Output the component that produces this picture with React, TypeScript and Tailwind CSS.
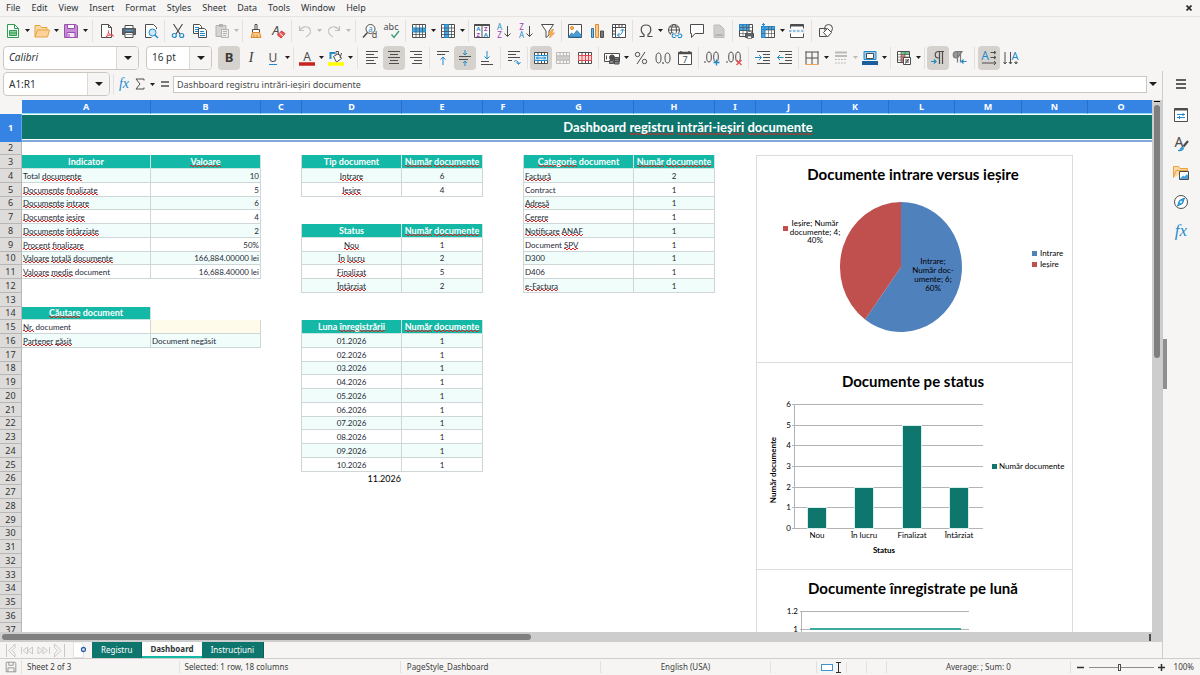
import React, { useState } from "react";

const G = "#4d4d4d";
const BLUE = "#1e8bcd";

/* ---------- icons ---------- */

function Svg({ children, size = 16 }: { children: React.ReactNode; size?: number }) {
  return (
    <svg width={size} height={size} viewBox="0 0 16 16" fill="none" stroke={G} strokeWidth={1} aria-hidden="true" className="shrink-0 overflow-visible">
      {children}
    </svg>
  );
}

function Glyph({ x, y, size, color = G, bold, italic, serif, children }: {
  x: number; y: number; size: number; color?: string; bold?: boolean; italic?: boolean; serif?: boolean; children: React.ReactNode;
}) {
  return (
    <text
      x={x} y={y} fontSize={size} fill={color} stroke="none" textAnchor="middle"
      fontWeight={bold ? 700 : 400} fontStyle={italic ? "italic" : "normal"}
      fontFamily={serif ? '"Liberation Serif", serif' : '"Noto Sans", sans-serif'}
    >
      {children}
    </text>
  );
}

const tableGrid = "M1.5 2.5h13v11h-13zM1.5 6h13M1.5 10h13M5 2.5v11M8.5 2.5v11M11.5 2.5v11";

const icons: Record<string, React.ReactNode> = {
  newDoc: (
    <>
      <path d="M2.5 1.5h7l4 4v9h-11z" fill="#fff" stroke="#2f9e4f" />
      <path d="M9.5 1.5v4h4" stroke="#2f9e4f" />
      <path d="M4.5 7.5h7v5h-7zM4.5 10h7" fill="#8ad0a0" stroke="#2f9e4f" />
    </>
  ),
  open: (
    <>
      <path d="M1 14V2.5h5l1.5 2H13v3" fill="#fbd9a5" stroke="#e8a33d" />
      <path d="M1 14L3.5 7h12l-2 7z" fill="#fcd29a" stroke="#e8a33d" />
    </>
  ),
  save: (
    <>
      <path d="M1.5 1.5H13L14.5 3v11.5h-13z" fill="#c58ed3" stroke="#9b4fb0" />
      <path d="M4.5 1.5h7v4h-7z" fill="#fff" stroke="#9b4fb0" />
      <path d="M4 9.5h8v5H4z" fill="#f3e3f7" stroke="#9b4fb0" />
      <path d="M6 11v3" stroke="#9b4fb0" />
    </>
  ),
  pdf: (
    <>
      <path d="M2.5 1.5h7l3 3v10h-10z" fill="#fff" />
      <path d="M9.5 1.5v3h3" />
      <path d="M7 14c2-2 3-5 2.5-6.500M9 9c1 2 3 4 6 4M7 14c1.5-1.5 4-2.5 7-2" stroke="#e5484d" />
    </>
  ),
  print: (
    <>
      <path d="M4 2.5h8v3H4z" fill="#fff" />
      <path d="M1.5 5.5h13v6h-13z" fill="#5b6770" stroke="#4d565d" />
      <path d="M4 9.5h8v5H4z" fill="#fff" />
      <path d="M5 11.5h6" stroke="#9a9a9a" />
      <path d="M4.5 7.5h7" stroke="#4aa3df" />
    </>
  ),
  preview: (
    <>
      <path d="M13.5 6V4.5l-3-3h-8v13h6" fill="#fff" />
      <circle cx="9.5" cy="9.5" r="3.5" fill="#cfe8f8" stroke={BLUE} />
      <path d="M12 12l3 3" stroke={BLUE} strokeWidth={1.5} />
    </>
  ),
  cut: (
    <>
      <path d="M3.5 1L10 11M12.5 1L6 11" strokeWidth={1.2} />
      <circle cx="4.3" cy="12.5" r="2" stroke={BLUE} strokeWidth={1.2} />
      <circle cx="11.7" cy="12.5" r="2" stroke={BLUE} strokeWidth={1.2} />
    </>
  ),
  copy: (
    <>
      <path d="M1.5 1.5h6l2 2v7h-8z" fill="#fff" />
      <path d="M3 4.5h4M3 6.5h3M3 8.5h3" stroke={BLUE} />
      <path d="M6.5 5.5h6l2 2v7h-8z" fill="#fff" />
      <path d="M8 8.5h4M8 10.5h5M8 12.5h5" stroke={BLUE} />
    </>
  ),
  paste: (
    <>
      <path d="M2 2.5h10v11H2z" fill="#d6d4d2" stroke="#b5b3b1" />
      <path d="M5 1h4v3H5z" fill="#b5b3b1" stroke="none" />
      <path d="M7.5 6.5h7v8h-7z" fill="#efeeed" stroke="#b5b3b1" />
      <path d="M9 8.5h4M9 10.5h4M9 12.5h3" stroke="#b5b3b1" />
    </>
  ),
  brush: (
    <>
      <path d="M7 1.5h2v5H7z" fill="#fff" />
      <path d="M4.5 6.5h7v3h-7z" fill="#fff" />
      <path d="M4.5 9.5h7l1.5 5H3z" fill="#fbc98a" stroke="#e08b2b" />
      <path d="M6 14v-2.5M9 14v-2" stroke="#e08b2b" />
    </>
  ),
  clear: (
    <>
      <Glyph x={6} y={12} size={13} italic>A</Glyph>
      <path d="M7.5 12l4-4L15 10.5 11 15z" fill="#ef5b5b" stroke="#d13438" />
      <path d="M9.500 10l3.500 3" stroke="#fff" />
    </>
  ),
  undo: <path d="M2.5 3v4.5H7M2.5 7.5C5 3.5 10 2.5 12.5 5.5s.5 6-3.5 8.5" stroke="#c2c0be" strokeWidth={1.2} />,
  redo: <path d="M13.5 3v4.5H9M13.5 7.5C11 3.5 6 2.5 3.5 5.5s-.5 6 3.5 8.5" stroke="#c2c0be" strokeWidth={1.2} />,
  find: (
    <>
      <circle cx="8.5" cy="6" r="4.5" fill="#fff" />
      <path d="M5.5 9.5L1 14.5" strokeWidth={1.5} />
      <Glyph x={8.5} y={8.5} size={8} color={BLUE}>a</Glyph>
      <Glyph x={12.5} y={15} size={9}>d</Glyph>
    </>
  ),
  spell: (
    <>
      <Glyph x={7} y={7} size={9}>abc</Glyph>
      <path d="M7.5 11.5l2.5 3L15 8" stroke="#2f9e6f" strokeWidth={1.3} />
    </>
  ),
  rowOps: (
    <>
      <path d="M1.5 1.5h13v13h-13z" fill="#fff" />
      <path d="M1.5 5h13v4h-13z" fill="#4aa3df" stroke={BLUE} />
      <path d="M1.5 11.5h13M5 1.5v13M8.5 1.5v13M11.5 1.5v13" strokeWidth={0.8} />
    </>
  ),
  colOps: (
    <>
      <path d="M1.5 1.5h13v13h-13z" fill="#fff" />
      <path d="M4.5 1.5h4v13h-4z" fill="#4aa3df" stroke={BLUE} />
      <path d="M1.5 5h13M1.5 8.5h13M1.5 11.5h13M11.5 1.5v13" strokeWidth={0.8} />
    </>
  ),
  sort: (
    <>
      <path d="M.5 1.5h15v13H.5zM8 1.5v13" fill="#fff" />
      <path d="M.5 2h15" strokeWidth={2} />
      <Glyph x={4.3} y={8} size={6} color={BLUE} bold>A</Glyph>
      <Glyph x={4.3} y={14} size={6} color="#a33bb5" bold>Z</Glyph>
      <Glyph x={11.8} y={8} size={6} color="#a33bb5" bold>Z</Glyph>
      <Glyph x={11.8} y={14} size={6} color={BLUE} bold>A</Glyph>
    </>
  ),
  sortAsc: (
    <>
      <Glyph x={3.5} y={7} size={8} color={BLUE}>A</Glyph>
      <Glyph x={3.5} y={15} size={8} color="#a33bb5">Z</Glyph>
      <path d="M11.5 3v10.5M8.5 10.5l3 3 3-3" />
    </>
  ),
  sortDesc: (
    <>
      <Glyph x={3.5} y={7} size={8} color="#a33bb5">Z</Glyph>
      <Glyph x={3.5} y={15} size={8} color={BLUE}>A</Glyph>
      <path d="M11.5 3v10.5M8.5 10.5l3 3 3-3" />
    </>
  ),
  filter: (
    <>
      <path d="M1.5 1.5h12L9 8v4l-3 2.5V8z" fill="#fff" />
      <path d="M12 6.500L8 11h3l-1.5 4 5-5h-3l2-3.500z" fill="#fbb55c" stroke="#e08b2b" strokeWidth={0.7} />
    </>
  ),
  image: (
    <>
      <path d="M1.5 1.5h13v13h-13z" fill="#fff" />
      <circle cx="5" cy="5" r="1.5" fill="#fbb55c" stroke="#e08b2b" />
      <path d="M2 13.5L4.5 10l2 1.5 3.500-4 4.5 5V14H2z" fill="#4a9fd9" stroke="#1f78b4" strokeWidth={0.8} />
    </>
  ),
  chart: (
    <>
      <path d="M2.5 5.5h2v9h-2z" fill="#7fb9e6" stroke="#1f78b4" />
      <path d="M6.5 1.5h3v13h-3z" fill="#fbc98a" stroke="#e08b2b" />
      <path d="M11.5 8h3v6.500h-3z" fill="#7a7a7a" />
    </>
  ),
  pivot: (
    <>
      <path d="M1.5 1.5h13v13h-13z" fill="#fff" />
      <path d="M1.5 4.5h13M4.5 1.5v13M8 1.5v3M11 1.5v3M1.5 8h3M1.5 11h3" />
      <path d="M6.5 12c3 .5 5.500-2 5-5.500M9.5 8l2-2 2 2M8.500 10l-2 2 2 2" stroke={BLUE} />
    </>
  ),
  omega: <path d="M1.5 13.5H6v-2C2.5 9.5 1.5 2 8 2s5.5 7.5 2 9.5v2h4.5" strokeWidth={1.2} />,
  link: (
    <>
      <circle cx="7" cy="7" r="5.5" fill="#fff" />
      <ellipse cx="7" cy="7" rx="2.5" ry="5.5" />
      <path d="M1.5 7h11M2.5 4h9M2.5 10h4" />
      <rect x="4" y="10.5" width="12" height="4.5" fill="#f6f5f4" stroke="none" />
      <path d="M8.5 11h-2a1.800 1.800 0 000 3.500h2M11 11h2.500a1.800 1.800 0 010 3.500H11M8 12.700h4" stroke={BLUE} strokeWidth={1.1} />
    </>
  ),
  comment: <path d="M1.5 1.5h13v9H6l-3.500 4v-4h-1z" fill="#fff" />,
  headerFooter: (
    <>
      <path d="M3 2h6l4 4v8.500H3z" fill="#d0cecc" stroke="#bdbbb9" />
      <path d="M4.5 11h7v2h-7z" fill="#b5b3b1" stroke="none" />
    </>
  ),
  printArea: (
    <>
      <path d="M1.5 1.5h13v12h-13z" fill="#fff" />
      <path d="M1.5 1.5h9v6h-9z" fill="#4aa3df" stroke={BLUE} />
      <path d="M1.5 4.5h13M1.5 7.5h13M1.5 10.5h13M5 1.5v12M8.5 1.5v12M11.5 1.5v12" strokeWidth={0.6} />
      <path d="M7.5 10.5h8v4h-8z" fill="#5b6770" />
      <path d="M9.5 8.5h4v2h-4zM9.5 13h4v2.500h-4z" fill="#fff" strokeWidth={0.7} />
    </>
  ),
  freeze: (
    <>
      <path d="M1.5 3.5h13v11h-13z" fill="#fff" />
      <path d="M1.5 3.5h13v3h-13zM1.5 3.5H5v11H1.500z" fill="#4aa3df" stroke={BLUE} />
      <path d="M5 7h9.500M5 10.500h9.500M8.5 3v11.500M11.5 3v11.500M1.5 10.500H5" strokeWidth={0.6} />
      <path d="M2 1.5h3M3.5 0v3" stroke={BLUE} />
    </>
  ),
  split: (
    <>
      <path d="M1.5 5.5v-4h13v4M1.5 10.5v4h13v-4" fill="#fff" />
      <path d="M1.5 2.5h13" strokeWidth={2} />
      <path d="M0 8h16" stroke={BLUE} strokeDasharray="2.5 1.5" />
    </>
  ),
  shapes: (
    <>
      <path d="M1.5 5.5h7v8h-7z" />
      <circle cx="10.5" cy="5.5" r="4" />
      <path d="M9.5 5.5l4 4-4 4.500-4-4.500z" fill="#fff" />
    </>
  ),
  bold: <Glyph x={8} y={12} size={13} bold color="#3a3a3a">B</Glyph>,
  italic: <Glyph x={8} y={12} size={14} italic serif color="#3a3a3a">I</Glyph>,
  underline: (
    <>
      <Glyph x={8} y={12} size={12}>U</Glyph>
      <path d="M4 14.5h8" stroke={BLUE} />
    </>
  ),
  fontColor: (
    <>
      <Glyph x={8} y={11} size={12}>A</Glyph>
      <path d="M0 14h16" stroke="#c9211e" strokeWidth={3.5} />
    </>
  ),
  highlight: (
    <>
      <path d="M2.500 9V3H7" stroke={BLUE} strokeWidth={2} />
      <path d="M5.5 6.500l5-3 3 5-5 3.500zM8 4.500v-3h2.500V5M12 8l1.500-5" fill="#fff" />
      <path d="M0 14h16" stroke="#ffff00" strokeWidth={3.5} />
    </>
  ),
  alignLeft: <path d="M2 1.5h12M2 4.5h8M2 7.5h12M2 10.5h8M2 13.5h10" />,
  alignCenter: <path d="M2 1.5h12M4 4.5h8M2 7.5h12M4 10.5h8M3 13.5h10" />,
  alignRight: <path d="M2 1.5h12M6 4.5h8M2 7.5h12M6 10.5h8M4 13.5h10" />,
  alignTop: (
    <>
      <path d="M2 1.5h12M2 4.5h8" />
      <path d="M8 15V7M5.5 9.5L8 7l2.5 2.5" stroke={BLUE} />
    </>
  ),
  alignMiddle: (
    <>
      <path d="M2 6.5h12M2 9.5h9" />
      <path d="M8 0v5M6 3l2 2 2-2M8 16v-5M6 13l2-2 2 2" stroke={BLUE} />
    </>
  ),
  alignBottom: (
    <>
      <path d="M2 11.5h8M2 14.5h12" />
      <path d="M8 1v8M5.5 6.5L8 9l2.5-2.5" stroke={BLUE} />
    </>
  ),
  wrap: (
    <>
      <path d="M2 1.5h12M2 4.5h8M2 7.5h12M2 10.5h4" />
      <path d="M8 11.5c2-1.5 4-1 4.500 2.500M10.500 12l2 2.500 2-2.500" stroke={BLUE} />
    </>
  ),
  merge: (
    <>
      <path d={tableGrid} fill="#fff" />
      <path d="M1.5 5.5h13v5h-13z" fill="#d8ecf9" stroke={BLUE} />
      <path d="M3 8h10M5 6.5L3.5 8 5 9.5M11 6.5L12.5 8 11 9.5" stroke={BLUE} />
    </>
  ),
  mergeCells: (
    <>
      <path d={tableGrid} stroke="#bdbbb9" />
      <path d="M1.5 6h13v4h-13z" fill="#d0cecc" stroke="#bdbbb9" />
    </>
  ),
  splitCells: (
    <>
      <path d={tableGrid} fill="#fff" />
      <path d="M1.5 5.5h13v5h-13zM5 5.5v5M8.5 5.5v5M11.5 5.5v5" fill="#fbdada" stroke="#e5484d" />
    </>
  ),
  currency: (
    <>
      <path d="M.5 3.5h15v8H.5z" fill="#fff" />
      <circle cx="8" cy="7.5" r="2.5" fill={G} />
      <path d="M2.500 5.5v4" />
      <path d="M5.5 10.5h4v3h-4zM10.5 7.5H15V14h-4.5zM10.5 9.5H15M10.5 11.5H15" fill="#8a8a8a" />
    </>
  ),
  percent: (
    <>
      <circle cx="4.5" cy="4.5" r="2.2" />
      <circle cx="11.5" cy="11.5" r="2.2" />
      <path d="M12 2L4 14" />
    </>
  ),
  number: (
    <>
      <ellipse cx="3.5" cy="8" rx="2.5" ry="5" />
      <ellipse cx="12.5" cy="8" rx="2.5" ry="5" />
      <path d="M8 12v2" strokeWidth={1.2} />
    </>
  ),
  date: (
    <>
      <path d="M1.5 2.5h13v12h-13z" fill="#fff" />
      <path d="M1.5 3h13" strokeWidth={2.5} />
      <path d="M4 1v2M12 1v2" strokeWidth={1.5} />
      <Glyph x={8} y={13} size={9}>7</Glyph>
    </>
  ),
  addDec: (
    <>
      <path d="M1 11v2" />
      <ellipse cx="5" cy="7" rx="2.3" ry="5" />
      <ellipse cx="12" cy="7" rx="2.3" ry="5" />
      <path d="M9.5 12.5h6M12.5 9.5v6" stroke={BLUE} strokeWidth={1.3} />
    </>
  ),
  delDec: (
    <>
      <path d="M1 11v2" />
      <ellipse cx="5" cy="7" rx="2.3" ry="5" />
      <ellipse cx="12" cy="7" rx="2.3" ry="5" />
      <path d="M10.5 10l5 5M15.5 10l-5 5" stroke="#e5484d" strokeWidth={1.2} />
    </>
  ),
  indent: (
    <>
      <path d="M2 1.5h13M8 4.5h7M8 7.5h7M8 10.5h7M2 13.5h13" />
      <path d="M0 7.5h6M4 5l2.5 2.5L4 10" stroke={BLUE} />
    </>
  ),
  outdent: (
    <>
      <path d="M2 1.5h13M8 4.5h7M8 7.5h7M8 10.5h7M2 13.5h13" />
      <path d="M.5 7.5h6M3 5L.5 7.5 3 10" stroke={BLUE} />
    </>
  ),
  borders: (
    <>
      <path d="M2 1.5v13M14 1.5v13M1.5 2h13M8 2v12M2 8h12" />
      <path d="M1.5 14.5h13" stroke="#f0a55a" />
    </>
  ),
  lineStyle: (
    <>
      <path d="M2 2.5h12M2 6h12" stroke="#bdbbb9" strokeWidth={2} />
      <path d="M2 9.5h12M2 13h12" stroke="#bdbbb9" strokeDasharray="2 1" />
    </>
  ),
  borderColor: (
    <>
      <path d="M2 1.5h12v8H2z" fill="#9ccbee" stroke={BLUE} />
      <path d="M4.5 3.5h7v5h-7z" fill="#fff" />
      <path d="M0 13h16" stroke="#1c5f9e" strokeWidth={4} />
    </>
  ),
  conditional: (
    <>
      <path d="M1.5 1.5h12v11h-12z" fill="#fff" />
      <path d="M5 2h8v3H5z" fill="#6cc788" stroke="none" />
      <path d="M5 5h4v7H5z" fill="#ef7f7f" stroke="none" />
      <path d="M1.5 4.5h12M1.5 7h12M1.5 10h12M5 1.5v11M9 1.5v11" strokeWidth={0.6} />
      <path d="M7.5 7.5h7v7h-7z" fill="#fff" />
      <path d="M9 10h4M9 12h4M12.5 9l-3 4.500" />
    </>
  ),
  ltr: (
    <>
      <path d="M14 1.5H8.500a3 3 0 000 6.500h1M9.5 1.5V14M12.5 1.5V14" strokeWidth={1.2} />
      <path d="M1 11.5h5M4 9.5l2 2-2 2" stroke={BLUE} strokeWidth={1.2} />
    </>
  ),
  rtl: (
    <>
      <path d="M10 1.5H4.500a3 3 0 000 6.500h1zM5.5 1.5v11M8.5 1.5v11" fill="#9a9a9a" stroke="#7a7a7a" strokeWidth={1.2} />
      <path d="M9.5 11.5h5M11.5 9.5l-2 2 2 2" stroke={BLUE} strokeWidth={1.2} />
    </>
  ),
  textH: (
    <>
      <Glyph x={4} y={10} size={12} color={BLUE}>A</Glyph>
      <path d="M9.5 2.5h5M13 1l2 1.500L13 4M9.5 7.5h5M13 6l2 1.500L13 9M1 13h14M13 11l2 2-2 2" />
    </>
  ),
  textV: (
    <>
      <path d="M2 2v12M.5 12L2 14l1.500-2M7.5 2v12M6 12l1.500 2L9 12M13 11v3M11.5 12l1.500 2 1.500-2" />
      <Glyph x={12} y={10} size={11} color={BLUE}>A</Glyph>
    </>
  ),
  properties: (
    <>
      <path d="M1.5 1.5h13v13h-13z" fill="#fff" />
      <path d="M1.5 2.5h13" strokeWidth={2} />
      <path d="M4 7.5h8M4 10.5h8M10 6v3M6.5 9v3" stroke={BLUE} />
    </>
  ),
  styles: (
    <>
      <Glyph x={6} y={11} size={14}>A</Glyph>
      <path d="M15 5l-4.500 5.500" strokeWidth={2.2} />
      <path d="M5 14.5c2 .5 5 0 5.500-2 .3-1.500-2-2-2.500-.500s-1 2.500-3 2.500z" fill="#4aa3df" stroke={BLUE} />
    </>
  ),
  gallery: (
    <>
      <path d="M.5 12.500v-11h5l1.500 2h7.500v2M.5 12.500L3 5.500h12" fill="#fbd9a5" stroke="#e8a33d" />
      <path d="M6.5 6.500h9v8h-9z" fill="#fff" />
      <path d="M7 13.500l3-3 1.500 1L14 9l1 1.500V14H7z" fill="#4aa3df" stroke="none" />
    </>
  ),
  navigator: (
    <>
      <circle cx="8" cy="8" r="6.5" fill="#fff" />
      <path d="M11.5 4l-2 5.500-5 2.500 2-5.500z" fill="#4aa3df" stroke={BLUE} />
      <circle cx="8" cy="8" r="1" fill="#fff" stroke="none" />
    </>
  ),
  menu: <path d="M3 4h10M3 8h10M3 12h10" stroke="#2e2e2e" strokeWidth={1.5} />,
  saved: (
    <>
      <path d="M2.5 2.5h10l1 1v10h-11z" stroke="#8f8d8b" />
      <path d="M5.5 2.5V6h5V2.500M4.5 13.500V9h7v4.500" stroke="#8f8d8b" />
    </>
  ),
};

/* ---------- toolbars ---------- */

type Tool = "sep" | "gap" | { icon: string; label: string; menu?: boolean; off?: boolean };

const standardTools: Tool[] = [
  { icon: "newDoc", label: "New", menu: true },
  { icon: "open", label: "Open", menu: true },
  { icon: "save", label: "Save", menu: true },
  "gap",
  { icon: "pdf", label: "Export as PDF" },
  { icon: "print", label: "Print" },
  { icon: "preview", label: "Print Preview" },
  "sep",
  { icon: "cut", label: "Cut" },
  { icon: "copy", label: "Copy" },
  { icon: "paste", label: "Paste", menu: true, off: true },
  "sep",
  { icon: "brush", label: "Clone Formatting" },
  { icon: "clear", label: "Clear Formatting" },
  "sep",
  { icon: "undo", label: "Undo", menu: true, off: true },
  { icon: "redo", label: "Redo", menu: true, off: true },
  "gap",
  { icon: "find", label: "Find and Replace" },
  { icon: "spell", label: "Spelling" },
  "sep",
  { icon: "rowOps", label: "Row", menu: true },
  { icon: "colOps", label: "Column", menu: true },
  "sep",
  { icon: "sort", label: "Sort" },
  { icon: "sortAsc", label: "Sort Ascending" },
  { icon: "sortDesc", label: "Sort Descending" },
  { icon: "filter", label: "AutoFilter" },
  "sep",
  { icon: "image", label: "Insert Image" },
  { icon: "chart", label: "Insert Chart" },
  { icon: "pivot", label: "Insert Pivot Table" },
  "sep",
  { icon: "omega", label: "Special Character", menu: true },
  { icon: "link", label: "Insert Hyperlink" },
  { icon: "comment", label: "Insert Comment" },
  { icon: "headerFooter", label: "Headers and Footers", off: true },
  "sep",
  { icon: "printArea", label: "Define Print Area" },
  { icon: "freeze", label: "Freeze Rows and Columns", menu: true },
  { icon: "split", label: "Split Window" },
  "gap",
  { icon: "shapes", label: "Draw Functions" },
];

const formatTools: Tool[] = [
  { icon: "bold", label: "Bold" },
  { icon: "italic", label: "Italic" },
  { icon: "underline", label: "Underline", menu: true },
  "sep",
  { icon: "fontColor", label: "Font Color", menu: true },
  { icon: "highlight", label: "Background Color", menu: true },
  "gap",
  { icon: "alignLeft", label: "Align Left" },
  { icon: "alignCenter", label: "Center Horizontally" },
  { icon: "alignRight", label: "Align Right" },
  "sep",
  { icon: "alignTop", label: "Align Top" },
  { icon: "alignMiddle", label: "Center Vertically" },
  { icon: "alignBottom", label: "Align Bottom" },
  "sep",
  { icon: "wrap", label: "Wrap Text" },
  "sep",
  { icon: "merge", label: "Merge and Center" },
  { icon: "mergeCells", label: "Merge Cells", off: true },
  { icon: "splitCells", label: "Unmerge Cells" },
  "sep",
  { icon: "currency", label: "Format as Currency", menu: true },
  { icon: "percent", label: "Format as Percent" },
  { icon: "number", label: "Format as Number" },
  { icon: "date", label: "Format as Date" },
  "sep",
  { icon: "addDec", label: "Add Decimal Place" },
  { icon: "delDec", label: "Delete Decimal Place" },
  "gap",
  { icon: "indent", label: "Increase Indent" },
  { icon: "outdent", label: "Decrease Indent" },
  "sep",
  { icon: "borders", label: "Borders", menu: true },
  { icon: "lineStyle", label: "Border Style", menu: true, off: true },
  { icon: "borderColor", label: "Border Color", menu: true },
  "sep",
  { icon: "conditional", label: "Conditional", menu: true },
  "sep",
  { icon: "ltr", label: "Left-To-Right" },
  { icon: "rtl", label: "Right-To-Left" },
  "gap",
  { icon: "textH", label: "Text direction from left to right" },
  { icon: "textV", label: "Text direction from top to bottom" },
];

function Caret({ big, off }: { big?: boolean; off?: boolean }) {
  return (
    <svg width={big ? 8 : 5} height={big ? 4 : 3} viewBox="0 0 8 4" preserveAspectRatio="none" aria-hidden="true">
      <path d="M0 0h8L4 4z" fill={off ? "#bdbbb9" : "#1e1e1e"} />
    </svg>
  );
}

function Toolbar({ tools, active, onToggle }: { tools: Tool[]; active: string[]; onToggle: (icon: string) => void }) {
  return (
    <>
      {tools.map((t, i) => {
        if (t === "sep" || t === "gap") {
          return (
            <div key={i} className={`flex h-[22px] shrink-0 justify-center ${t === "gap" ? "w-[7px]" : "w-[5px]"}`}>
              <div className="w-px bg-[#e3e1df]" />
            </div>
          );
        }
        const on = active.includes(t.icon);
        return (
          <div key={t.icon} className="flex shrink-0 items-center">
            <button
              aria-label={t.label}
              disabled={t.off}
              onClick={() => onToggle(t.icon)}
              className={`flex h-6 w-[22px] items-center justify-center rounded ${on ? "bg-[#d5d2ce]" : "hover:bg-[#eae8e6]"}`}
            >
              <Svg>{icons[t.icon]}</Svg>
            </button>
            {t.menu && (
              <button aria-label={`${t.label} options`} disabled={t.off} className="flex h-6 w-[7px] items-center justify-center">
                <Caret off={t.off} />
              </button>
            )}
          </div>
        );
      })}
    </>
  );
}

function Combo({ label, value, className, italic }: { label: string; value: string; className: string; italic?: boolean }) {
  return (
    <div className={`flex h-6 shrink-0 overflow-hidden rounded border border-[#cdc7c2] bg-white ${className}`}>
      <input
        aria-label={label}
        defaultValue={value}
        className={`min-w-0 flex-1 bg-transparent pl-[5px] text-[10px] text-[#2e3436] outline-none ${italic ? "italic" : ""}`}
      />
      <button aria-label={`${label} list`} className="flex w-[22px] shrink-0 items-center justify-center border-l border-[#dcd8d4] bg-[#f6f5f4]">
        <Caret big />
      </button>
    </div>
  );
}

/* ---------- sheet data ---------- */

type Align = "left" | "center" | "right";
interface Cell {
  text: string;
  align: Align;
  kind: "head" | "body" | "plain" | "edge";
  tint?: string;
}

const columns = [
  { name: "A", w: "w-[129px]" },
  { name: "B", w: "w-[110px]" },
  { name: "C", w: "w-[41px]" },
  { name: "D", w: "w-[100px]" },
  { name: "E", w: "w-[81px]" },
  { name: "F", w: "w-[41px]" },
  { name: "G", w: "w-[110px]" },
  { name: "H", w: "w-[81px]" },
  { name: "I", w: "w-[41px]" },
  { name: "J", w: "w-[66px]" },
  { name: "K", w: "w-[67px]" },
  { name: "L", w: "w-[66px]" },
  { name: "M", w: "w-[67px]" },
  { name: "N", w: "w-[66px]" },
  { name: "O", w: "w-[67px]" },
  { name: "P", w: "w-[66px]" },
  { name: "Q", w: "w-[67px]" },
  { name: "R", w: "w-[66px]" },
];

// underscores wrap the words flagged by the spell checker
const blocks: { row: number; before?: string; cols: [string, string]; align: [Align, Align]; data: [string, string][] }[] = [
  {
    row: 3, cols: ["A", "B"], align: ["left", "right"],
    data: [
      ["Indicator", "_Valoare_"],
      ["Total _documente_", "10"],
      ["_Documente_ _finalizate_", "5"],
      ["_Documente_ _intrare_", "6"],
      ["_Documente_ _iesire_", "4"],
      ["_Documente_ _întârziate_", "2"],
      ["_Procent_ _finalizare_", "50%"],
      ["_Valoare_ _totală_ _documente_", "166,884.00000 lei"],
      ["_Valoare_ _medie_ document", "16,688.40000 lei"],
    ],
  },
  {
    row: 3, before: "C", cols: ["D", "E"], align: ["center", "center"],
    data: [["Tip document", "_Număr_ _documente_"], ["_Intrare_", "6"], ["_Iesire_", "4"]],
  },
  {
    row: 8, before: "C", cols: ["D", "E"], align: ["center", "center"],
    data: [
      ["Status", "_Număr_ _documente_"],
      ["_Nou_", "1"],
      ["_În_ _lucru_", "2"],
      ["_Finalizat_", "5"],
      ["_Întârziat_", "2"],
    ],
  },
  {
    row: 15, before: "C", cols: ["D", "E"], align: ["center", "center"],
    data: [
      ["Luna _înregistrării_", "_Număr_ _documente_"],
      ...["01", "02", "03", "04", "05", "06", "07", "08", "09", "10"].map((m) => [`${m}.2026`, "1"] as [string, string]),
    ],
  },
  {
    row: 3, before: "F", cols: ["G", "H"], align: ["left", "center"],
    data: [
      ["_Categorie_ document", "_Număr_ _documente_"],
      ["_Factură_", "2"],
      ["Contract", "1"],
      ["_Adresă_", "1"],
      ["_Cerere_", "1"],
      ["_Notificare_ _ANAF_", "1"],
      ["Document _SPV_", "1"],
      ["D300", "1"],
      ["D406", "1"],
      ["_e-Factura_", "1"],
    ],
  },
];

const cells: Record<string, Cell> = {
  A14: { text: "_Căutare_ document", align: "center", kind: "head" },
  A15: { text: "_Nr._ document", align: "left", kind: "body" },
  B15: { text: "", align: "left", kind: "body", tint: "bg-[#fffbeb]" },
  A16: { text: "_Partener_ _găsit_", align: "left", kind: "body", tint: "bg-[#f0fdfa]" },
  B16: { text: "Document negăsit", align: "left", kind: "body", tint: "bg-[#f0fdfa]" },
  D26: { text: "11.2026", align: "right", kind: "plain" },
};

blocks.forEach((b) =>
  b.data.forEach((pair, r) => {
    const row = b.row + r;
    if (b.before) cells[b.before + row] = { text: "", align: "left", kind: "edge" };
    pair.forEach((text, c) => {
      cells[b.cols[c] + row] = {
        text,
        align: r === 0 ? "center" : b.align[c],
        kind: r === 0 ? "head" : "body",
        tint: row % 2 === 0 ? "bg-[#f0fdfa]" : "bg-white",
      };
    });
  })
);

const alignClass = { left: "text-left", center: "text-center", right: "text-right" };

const kindClass = {
  head: "bg-[#14b8a6] text-[9px] font-bold text-white border-r border-b border-[#cbe5e1]",
  body: "text-[8px] text-[#1f2937] border-r border-b border-[#cfd6d8]",
  plain: "text-[9px] text-black",
  edge: "border-r border-[#cfd6d8]",
};

function Spelled({ text }: { text: string }) {
  return (
    <>
      {text.split("_").map((part, i) =>
        i % 2 ? (
          <span
            key={i}
            className="bg-[linear-gradient(45deg,transparent_35%,#dc2626_35%,#dc2626_65%,transparent_65%),linear-gradient(135deg,transparent_35%,#dc2626_35%,#dc2626_65%,transparent_65%)] bg-[length:4px_2px,4px_2px] bg-[position:0_100%,2px_100%] bg-repeat-x"
          >
            {part}
          </span>
        ) : (
          part
        )
      )}
    </>
  );
}

function SheetCell({ cell }: { cell?: Cell }) {
  if (!cell) return <td className="p-0" />;
  return (
    <td className={`overflow-hidden px-px py-0 leading-3 whitespace-nowrap ${alignClass[cell.align]} ${kindClass[cell.kind]} ${cell.tint && cell.kind === "body" ? cell.tint : ""}`}>
      <Spelled text={cell.text} />
    </td>
  );
}

function SheetTable() {
  const rows = Array.from({ length: 36 }, (_, i) => i + 2);
  return (
    <table className="w-[1353px] table-fixed border-separate border-spacing-0 font-[Lato,sans-serif]">
      <colgroup>
        <col className="w-[22px]" />
        {columns.map((c) => (
          <col key={c.name} className={c.w} />
        ))}
      </colgroup>
      <thead>
        <tr className="h-[14px] font-['Noto_Sans',sans-serif] text-[9px] leading-3 text-white">
          <th className="bg-[#f6f5f4] p-0" aria-label="Select all" />
          {columns.map((c) => (
            <th key={c.name} scope="col" className="border-r border-b border-r-[#2a6fc4] border-b-[#8fdcf5] bg-[#3584e4] p-0 font-bold">
              {c.name}
            </th>
          ))}
        </tr>
      </thead>
      <tbody>
        <tr className="h-[28px]">
          <th scope="row" className="border-r border-[#5ea0ee] bg-[#3584e4] p-0 font-['Noto_Sans',sans-serif] text-[9px] font-bold text-white">1</th>
          <td colSpan={18} className="border-t border-b-2 border-t-white border-b-[#7fa8de] bg-white p-0 align-top">
            <h1 className="h-6 bg-[#0f766e] text-center text-[13px] leading-6 font-bold text-white">
              <Spelled text="Dashboard _registru_ _intrări-ieșiri_ _documente_" />
            </h1>
          </td>
        </tr>
        {rows.map((n) => (
          <tr key={n} className={n % 4 === 2 ? "h-[13px]" : "h-[14px]"}>
            <th
              scope="row"
              className="border-r border-b border-[#b9b7b5] bg-[#dedcda] p-0 align-bottom font-['Noto_Sans',sans-serif] text-[9px] leading-3 font-normal text-[#2e3436]"
            >
              {n}
            </th>
            {columns.map((c) => (
              <SheetCell key={c.name} cell={cells[c.name + n]} />
            ))}
          </tr>
        ))}
      </tbody>
    </table>
  );
}

/* ---------- charts ---------- */

function ChartFrame({ title, children }: { title: string; children: React.ReactNode }) {
  return (
    <div className="border-b border-[#dcdcdc] bg-white">
      <svg
        width="315" height="206" viewBox="1 1 315 206" role="img" aria-label={title}
        className="block font-[Lato,sans-serif]" fontSize="8" textAnchor="middle"
      >
        <text x="157" y="25" fontSize="15" fontWeight="700">{title}</text>
        {children}
      </svg>
    </div>
  );
}

function PieChart() {
  return (
    <ChartFrame title="Documente intrare versus ieșire">
      <path d="M145 112V47A61 65 0 1 1 109 164.500Z" fill="#4f81bd" />
      <path d="M145 112L109 164.500A61 65 0 0 1 145 47Z" fill="#c0504d" />
      <rect x="27" y="71" width="5" height="5" fill="#c0504d" />
      <text x="59" y="71">Ieșire; Număr</text>
      <text x="59" y="80">documente; 4;</text>
      <text x="59" y="88">40%</text>
      <text x="177" y="109">Intrare;</text>
      <text x="177" y="118">Număr doc-</text>
      <text x="177" y="127">umente; 6;</text>
      <text x="177" y="136">60%</text>
      <g textAnchor="start">
        <rect x="276" y="96" width="5" height="5" fill="#4f81bd" />
        <text x="284" y="101">Intrare</text>
        <rect x="276" y="107" width="5" height="5" fill="#c0504d" />
        <text x="284" y="112">Ieșire</text>
      </g>
    </ChartFrame>
  );
}

const statusData = [
  { name: "Nou", value: 1 },
  { name: "În lucru", value: 2 },
  { name: "Finalizat", value: 5 },
  { name: "Întârziat", value: 2 },
];

function StatusChart() {
  const y = (v: number) => Math.round(166 - v * 20.66);
  return (
    <ChartFrame title="Documente pe status">
      {[0, 1, 2, 3, 4, 5, 6].map((v) => (
        <g key={v}>
          <line x1="36" x2="227" y1={y(v) + 0.5} y2={y(v) + 0.5} stroke="#b3b3b3" />
          <text x="35" y={y(v) + 3} textAnchor="end">{v}</text>
        </g>
      ))}
      <line x1="38.5" x2="38.5" y1="42" y2="167" stroke="#b3b3b3" />
      {statusData.map((d, i) => {
        const cx = 61 + Math.round(i * 47.3);
        return (
          <g key={d.name}>
            <rect x={cx - 10} y={y(d.value)} width="20" height={167 - y(d.value)} fill="#d5f0ec" />
            <rect x={cx - 9} y={y(d.value) + 1} width="18" height={165 - y(d.value)} fill="#0f766e" />
            <text x={cx} y="176">{d.name}</text>
          </g>
        );
      })}
      <text x="128" y="191" fontWeight="700">Status</text>
      <text transform="translate(20 108) rotate(-90)" fontWeight="700">Număr documente</text>
      <rect x="236" y="102" width="5" height="5" fill="#0f766e" />
      <text x="243" y="107" textAnchor="start">Număr documente</text>
    </ChartFrame>
  );
}

function MonthChart() {
  return (
    <ChartFrame title="Documente înregistrate pe lună">
      {["1.2", "1", "0.8", "0.6", "0.4", "0.2", "0"].map((label, i) => (
        <g key={label}>
          <text x="42" y={45 + i * 18} textAnchor="end">{label}</text>
          <line x1="44" x2="213" y1={42.5 + i * 18} y2={42.5 + i * 18} stroke="#b3b3b3" />
        </g>
      ))}
      <line x1="45.5" x2="45.5" y1="42" y2="151" stroke="#b3b3b3" />
      <line x1="54" x2="205" y1="60" y2="60" stroke="#3aa9a0" strokeWidth="2" />
    </ChartFrame>
  );
}

/* ---------- page ---------- */

const menus = ["File", "Edit", "View", "Insert", "Format", "Styles", "Sheet", "Data", "Tools", "Window", "Help"];
const sheets = ["Registru", "Dashboard", "Instrucțiuni"];
const panels = [
  { icon: "properties", label: "Properties" },
  { icon: "styles", label: "Styles" },
  { icon: "gallery", label: "Gallery" },
  { icon: "navigator", label: "Navigator" },
];

function FormulaBar() {
  return (
    <div className="flex h-[29px] items-start bg-[#f6f5f4] pt-px pr-[5px] pl-[3px]">
      <Combo label="Name Box" value="A1:R1" className="w-[107px]" />
      <div className="flex h-6 flex-1 items-center">
        <div className="ml-[3px] h-5 w-px bg-[#e3e1df]" />
        <button aria-label="Function Wizard" className="ml-1 w-[12px] font-['Liberation_Serif',serif] text-[14px] leading-4 text-[#1e8bcd] italic">fx</button>
        <button aria-label="Select Function" className="ml-1 flex w-[12px] justify-center">
          <svg width="10" height="12" viewBox="0 0 10 12" fill="none" stroke={G}>
            <path d="M9 2.5V1H1l4 5-4 5h8V9.5" />
          </svg>
        </button>
        <button aria-label="Function list" className="flex w-3 justify-center">
          <Caret />
        </button>
        <button aria-label="Formula" className="flex w-[14px] justify-center">
          <svg width="8" height="6" viewBox="0 0 8 6" stroke={G} strokeWidth="1.5">
            <path d="M0 1h8M0 5h8" />
          </svg>
        </button>
        <input
          aria-label="Input line"
          defaultValue="Dashboard registru intrări-ieșiri documente"
          className="ml-px h-[17px] min-w-0 flex-1 border border-[#cdc7c2] bg-white pl-[3px] text-[9px] text-[#4a4a4a] outline-none"
        />
        <button aria-label="Expand Formula Bar" className="ml-[2px]">
          <Caret big />
        </button>
      </div>
    </div>
  );
}

function StatusBar() {
  return (
    <footer className="flex h-[17px] shrink-0 items-center border-t border-[#cfcdcb] bg-[#f6f5f4] text-[8px] text-[#3d3d3d]">
      <div className="flex w-[22px] shrink-0 justify-center border-r border-[#e3e1df]"><Svg size={14}>{icons.saved}</Svg></div>
      <div className="flex-[152] border-r border-[#e3e1df] pl-[5px]">Sheet 2 of 3</div>
      <div className="flex-[216] border-r border-[#e3e1df] pl-[5px]">Selected: 1 row, 18 columns</div>
      <div className="flex-[194] border-r border-[#e3e1df] pl-[6px]">PageStyle_Dashboard</div>
      <div className="flex-[169] border-r border-[#e3e1df] text-center">English (USA)</div>
      <div className="h-3 w-[46px] border-r border-[#e3e1df]" />
      <div className="flex w-[30px] items-center justify-center gap-[3px] border-r border-[#e3e1df]">
        <span className="h-[7px] w-3 border border-[#3f93d0] bg-white" />
        <svg width="5" height="11" viewBox="0 0 5 11" stroke="#2e2e2e" aria-hidden="true">
          <path d="M0 .5h5M0 10.5h5M2.5 0v11" />
        </svg>
      </div>
      <div className="h-3 w-5 border-r border-[#e3e1df]" />
      <div className="h-3 w-5 border-r border-[#e3e1df]" />
      <div className="flex-[184] border-r border-[#e3e1df] text-center">Average: ; Sum: 0</div>
      <div className="flex w-[129px] shrink-0 items-center justify-end gap-1 pr-[6px]">
        <button aria-label="Zoom Out" className="flex w-2 justify-center">
          <svg width="7" height="7" viewBox="0 0 7 7" stroke="#2e2e2e" strokeWidth="1.5"><path d="M0 3.5h7" /></svg>
        </button>
        <input
          type="range"
          aria-label="Zoom"
          min={0}
          max={100}
          defaultValue={48}
          className="h-3 w-[65px] appearance-none bg-transparent [&::-webkit-slider-runnable-track]:h-px [&::-webkit-slider-runnable-track]:bg-[#8f8d8b] [&::-webkit-slider-thumb]:-mt-[3px] [&::-webkit-slider-thumb]:h-[7px] [&::-webkit-slider-thumb]:w-[3px] [&::-webkit-slider-thumb]:appearance-none [&::-webkit-slider-thumb]:border [&::-webkit-slider-thumb]:border-[#4d4d4d] [&::-webkit-slider-thumb]:bg-white"
        />
        <button aria-label="Zoom In" className="flex w-2 justify-center">
          <svg width="7" height="7" viewBox="0 0 7 7" stroke="#2e2e2e" strokeWidth="1.5"><path d="M0 3.5h7M3.5 0v7" /></svg>
        </button>
        <span className="ml-1">100%</span>
      </div>
    </footer>
  );
}

export default function App() {
  const [sheet, setSheet] = useState("Dashboard");
  const [active, setActive] = useState(["bold", "alignCenter", "alignMiddle", "merge", "ltr", "textH"]);

  const toggle = (icon: string) => {
    if (!formatTools.some((t) => typeof t === "object" && t.icon === icon)) return;
    setActive((prev) => (prev.includes(icon) ? prev.filter((x) => x !== icon) : [...prev, icon]));
  };

  return (
    <div className="flex h-screen flex-col overflow-hidden bg-[#f6f5f4] font-['Noto_Sans',sans-serif] text-[#2e3436]">
      {/* Menu bar */}
      <nav className="flex h-[17px] shrink-0 items-center gap-[11px] border-b border-[#e6e4e2] pr-2 pl-[6px] text-[9px] leading-4">
        {menus.map((m) => (
          <button key={m} className="hover:bg-[#e3e1df]">{m}</button>
        ))}
        <button aria-label="Close Document" className="ml-auto">
          <svg width="6" height="6" viewBox="0 0 6 6" stroke="#2e2e2e" strokeWidth="1.7"><path d="M.5 .5l5 5M5.5 .5l-5 5" /></svg>
        </button>
      </nav>

      {/* Toolbars */}
      <div className="flex h-[27px] shrink-0 items-center pl-[2px]">
        <Toolbar tools={standardTools} active={active} onToggle={toggle} />
      </div>
      <div className="flex h-[27px] shrink-0 items-center pl-[3px]">
        <Combo label="Font Name" value="Calibri" className="mr-[7px] w-[136px]" italic />
        <Combo label="Font Size" value="16 pt" className="mr-[6px] w-[66px]" />
        <Toolbar tools={formatTools} active={active} onToggle={toggle} />
      </div>

      <div className="flex min-h-0 flex-1">
        <div className="flex min-w-0 flex-1 flex-col">
          <FormulaBar />

          <div className="flex min-h-0 flex-1">
            <main className="relative min-w-0 flex-1 overflow-hidden bg-white">
              <SheetTable />
              {/* Charts float above the cells */}
              <div className="absolute top-[55px] left-[756px] border-x border-t border-[#dcdcdc]">
                <PieChart />
                <StatusChart />
                <MonthChart />
              </div>
            </main>
            <div className="flex w-[10px] shrink-0 flex-col items-center bg-[#cdcdcd]">
              <div className="mt-px h-px w-[6px] bg-black" />
              <div className="mt-[3px] h-[253px] w-[6px] rounded-full bg-[#7f7f7f]" />
            </div>
          </div>

          <div className="flex h-[10px] shrink-0 items-center bg-[#cdcdcd] pr-[11px] pl-[2px]">
            <div className="h-[6px] w-[46%] rounded-full bg-[#7f7f7f]" />
            <div className="ml-auto h-[7px] w-[2px] bg-[#4d4d4d]" />
          </div>

          {/* Sheet tabs */}
          <div className="flex h-4 shrink-0 items-stretch text-[8px]">
            <button aria-label="Scroll sheets" className="ml-[5px] flex w-[62px] shrink-0 items-center">
              <svg width="62" height="13" viewBox="0 0 62 13" fill="none" stroke="#cbc9c7" aria-hidden="true">
                <path d="M1.5 0v13M3.5 6.5L10 0v3.500L7 6.500l3 3V13zM16.5 3v7M18 6.500L22.500 3v7zM23 6.500L27.500 3v7zM33 3l4.500 3.500L33 10zM38 3l4.500 3.500L38 10zM44.500 3v7M49.500 0L56 6.500 49.500 13V9.500l3-3-3-3zM59.500 0v13" />
              </svg>
            </button>
            <button aria-label="Add Sheet" className="mx-[6px] flex w-[13px] shrink-0 items-center justify-center">
              <svg width="13" height="16" viewBox="0 0 13 16" fill="none" aria-hidden="true">
                <path d="M.5 0h7l3 3v12.5H.5z" fill="#fff" stroke="#e3e1df" />
                <circle cx="10.5" cy="7.5" r="2" stroke="#2a5db0" strokeWidth="1.3" />
              </svg>
            </button>
            {sheets.map((s) => (
              <button
                key={s}
                onClick={() => setSheet(s)}
                className={
                  s === sheet
                    ? "border-b-2 border-[#14b8a6] bg-white px-2 leading-[14px] font-bold text-[#2e3436]"
                    : "border-r border-[#0b5f58] bg-[#0f766e] px-[9px] leading-[14px] text-white"
                }
              >
                {s}
              </button>
            ))}
          </div>
        </div>

        {/* Sidebar deck */}
        <aside className="flex w-[38px] shrink-0 border-l border-[#cfcdcb]">
          <button aria-label="Hide sidebar" className="mt-[268px] h-[50px] w-[4px] shrink-0 bg-[#8f8f8f]" />
          <div className="flex flex-1 flex-col items-center pt-[5px] pr-[5px]">
            <button aria-label="Sidebar Settings" className="mb-[15px]"><Svg>{icons.menu}</Svg></button>
            {panels.map((p) => (
              <button key={p.icon} aria-label={p.label} className="mb-[13px]"><Svg>{icons[p.icon]}</Svg></button>
            ))}
            <button aria-label="Functions" className="font-['Liberation_Serif',serif] text-[17px] leading-4 text-[#1e8bcd] italic">fx</button>
          </div>
        </aside>
      </div>

      <StatusBar />
    </div>
  );
}
